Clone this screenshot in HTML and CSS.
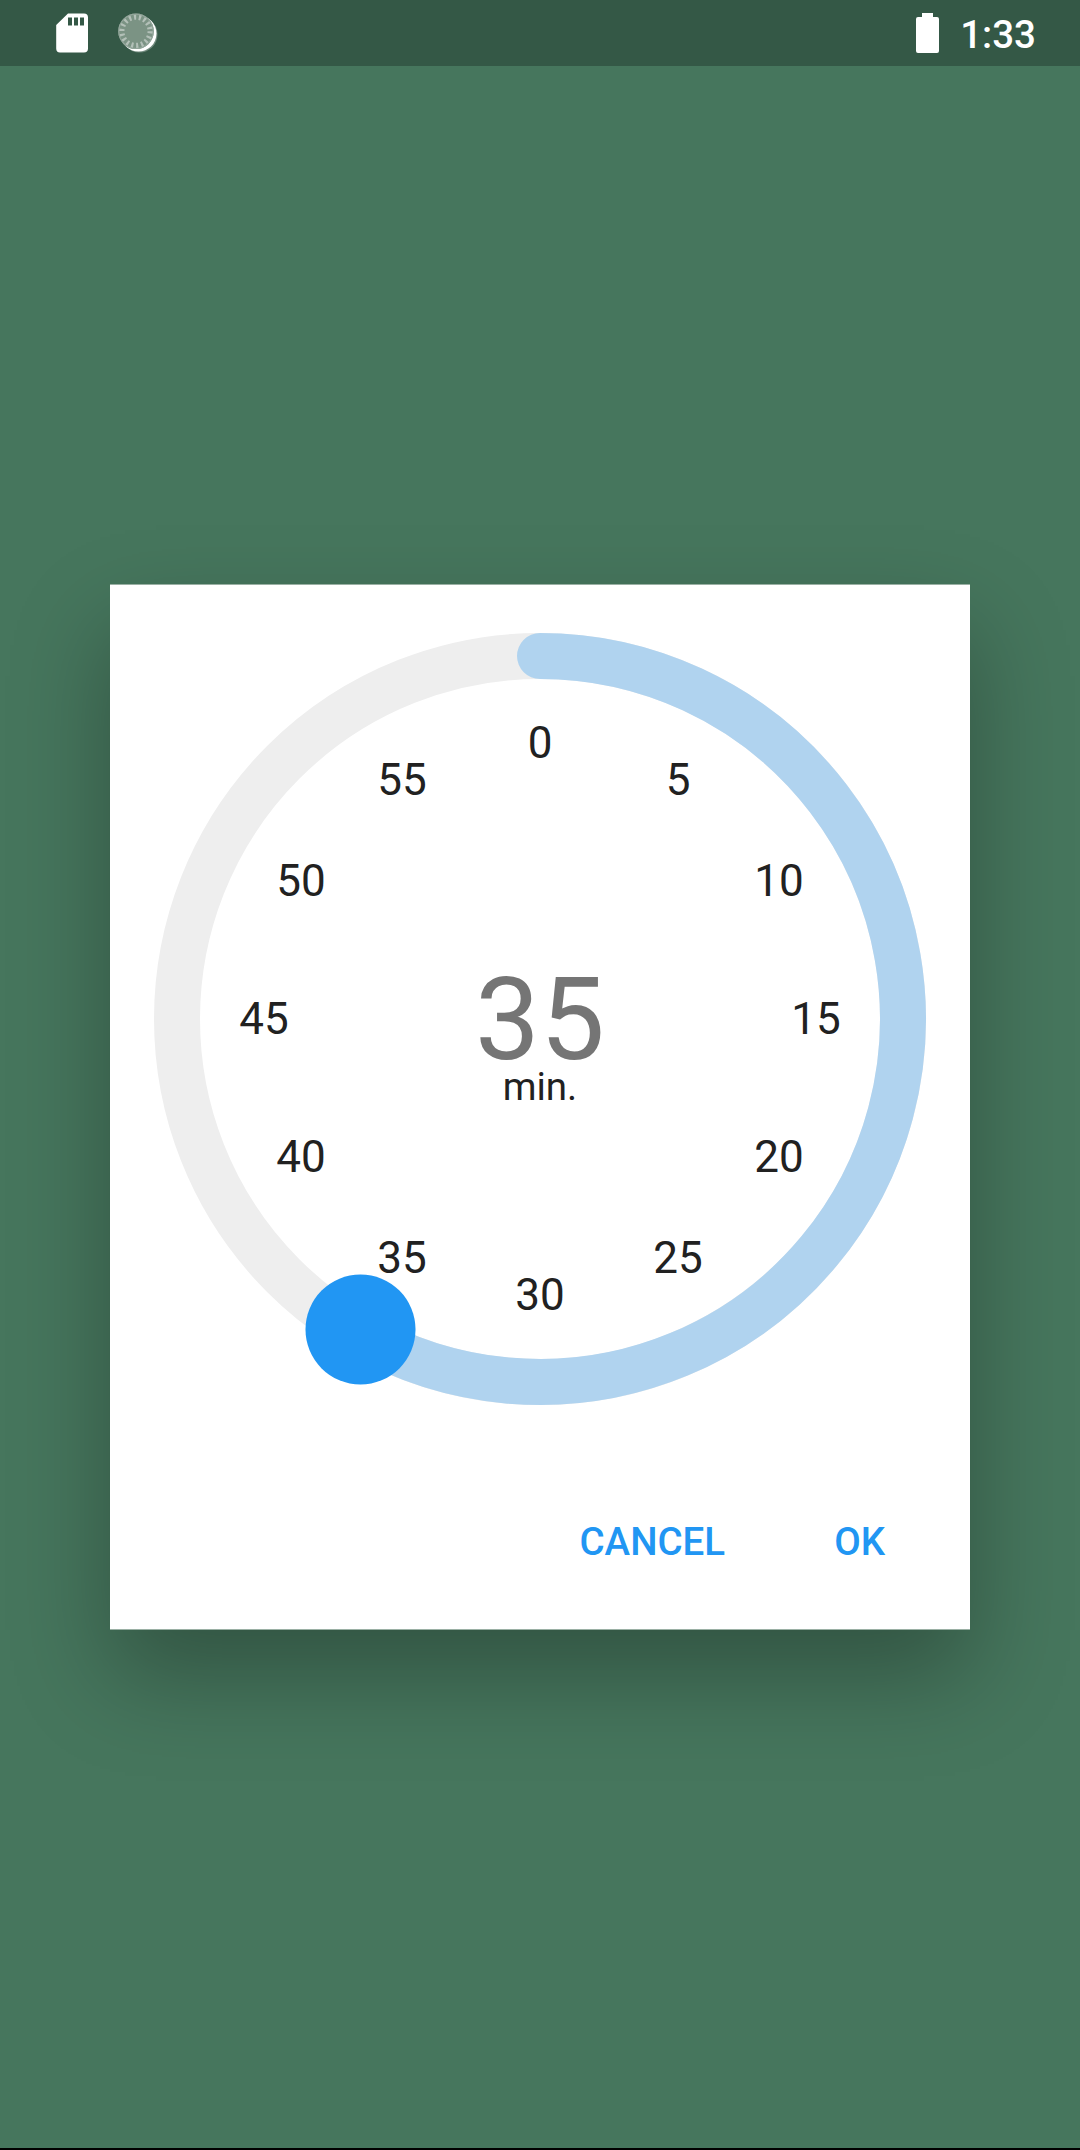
FILE: index.html
```html
<!DOCTYPE html>
<html lang="en">
<head>
<meta charset="utf-8">
<title>Duration picker</title>
<link rel="stylesheet" href="styles.css">
</head>
<body>
<div class="screen">
  <header class="status-bar">
    <div class="status-group">
      <svg class="icon-sd" viewBox="0 0 32 40" width="32" height="40">
        <path fill="#fff" fill-rule="evenodd" d="M12 .4H28Q32 .4 32 4.400V35.600Q32 39.500 28 39.500H4Q.2 39.500 .2 35.600V12Zm0 4v8h4v-8Zm6 0v8h4v-8Zm6 0v8h4v-8Z"/>
      </svg>
      <svg class="icon-spinner" viewBox="0 0 40 40" width="40" height="40">
        <circle cx="21.500" cy="21.500" r="18" fill="#b9c6bf" opacity=".45"/>
        <circle cx="20.500" cy="20.500" r="18" fill="#fff"/>
        <circle cx="18" cy="18.300" r="17.800" fill="#7b9384"/>
        <circle cx="18" cy="18.300" r="14.300" fill="none" stroke="#b3c0b8" stroke-width="5.500" stroke-dasharray="2.200 2.792"/>
        <circle cx="18" cy="18.300" r="17.200" fill="none" stroke="#92a59a" stroke-width="1.200"/>
      </svg>
    </div>
    <div class="status-group">
      <svg class="icon-battery" viewBox="0 0 23 40" width="23" height="40">
        <path fill="#fff" d="M6 0H17V4H21Q23 4 23 6V38Q23 40 21 40H2Q0 40 0 38V6Q0 4 2 4H6Z"/>
      </svg>
      <span class="clock">1:33</span>
    </div>
  </header>
  <main class="content">
    <section class="dialog">
      <svg class="dial" viewBox="-430 -434 860 880" width="860" height="880">
        <circle class="track" r="363"/>
        <path class="progress" d="M0-363A363 363 0 1 1-181.500 314.400"/>
        <g class="labels">
          <text x="0" y="-261">0</text>
          <text x="138" y="-224">5</text>
          <text x="239" y="-123">10</text>
          <text x="276" y="15">15</text>
          <text x="239" y="153">20</text>
          <text x="138" y="254">25</text>
          <text x="0" y="291">30</text>
          <text x="-138" y="254">35</text>
          <text x="-239" y="153">40</text>
          <text x="-276" y="15">45</text>
          <text x="-239" y="-123">50</text>
          <text x="-138" y="-224">55</text>
        </g>
        <text class="value" x="0" y="40">35</text>
        <text class="unit" x="0" y="81">min.</text>
        <circle class="knob" cx="-179.500" cy="310.500" r="55"/>
      </svg>
      <div class="actions">
        <button class="action">CANCEL</button>
        <button class="action">OK</button>
      </div>
    </section>
  </main>
</div>
</body>
</html>
```
FILE: styles.css
```css
* { box-sizing: border-box; }

body {
  margin: 0;
  font-family: Roboto, sans-serif;
}

.screen {
  display: flex;
  flex-direction: column;
  width: 1080px;
  height: 2150px;
  overflow: hidden;
  background: #46765d;
  border-bottom: 2px solid #000;
}

.status-bar {
  display: flex;
  justify-content: space-between;
  flex: none;
  height: 66px;
  padding: 13px 44px 0 56px;
  background: #345846;
  color: #fff;
}

.status-group {
  display: flex;
  align-items: flex-start;
}

.icon-spinner { margin-left: 30px; }

.clock {
  margin-left: 21px;
  font-size: 38.5px;
  font-weight: 500;
  line-height: 44px;
}

.content { padding: 518px 110px 0; }

.dialog {
  display: flex;
  flex-direction: column;
  height: 1046px;
  background: #fff;
  border: solid #9ab0a4;
  border-width: 1px 0;
  box-shadow: 0 46px 92px rgba(0, 0, 0, .29);
}

.dial {
  display: block;
  flex: none;
}

.track {
  fill: none;
  stroke: #eee;
  stroke-width: 46;
}

.progress {
  fill: none;
  stroke: #b0d3ef;
  stroke-width: 46;
  stroke-linecap: round;
}

.knob { fill: #2196f3; }

.labels, .unit {
  fill: #212121;
  font-size: 44px;
  text-anchor: middle;
}

.unit { font-size: 38.5px; }

.value {
  fill: #757575;
  font-size: 115.5px;
  text-anchor: middle;
}

.actions {
  display: flex;
  justify-content: flex-end;
  gap: 65px;
  padding: 43px 63px 0 0;
}

.action {
  padding: 11px 22px;
  border: 0;
  background: none;
  color: #2196f3;
  font: 500 38.5px/45px Roboto, sans-serif;
}
```
